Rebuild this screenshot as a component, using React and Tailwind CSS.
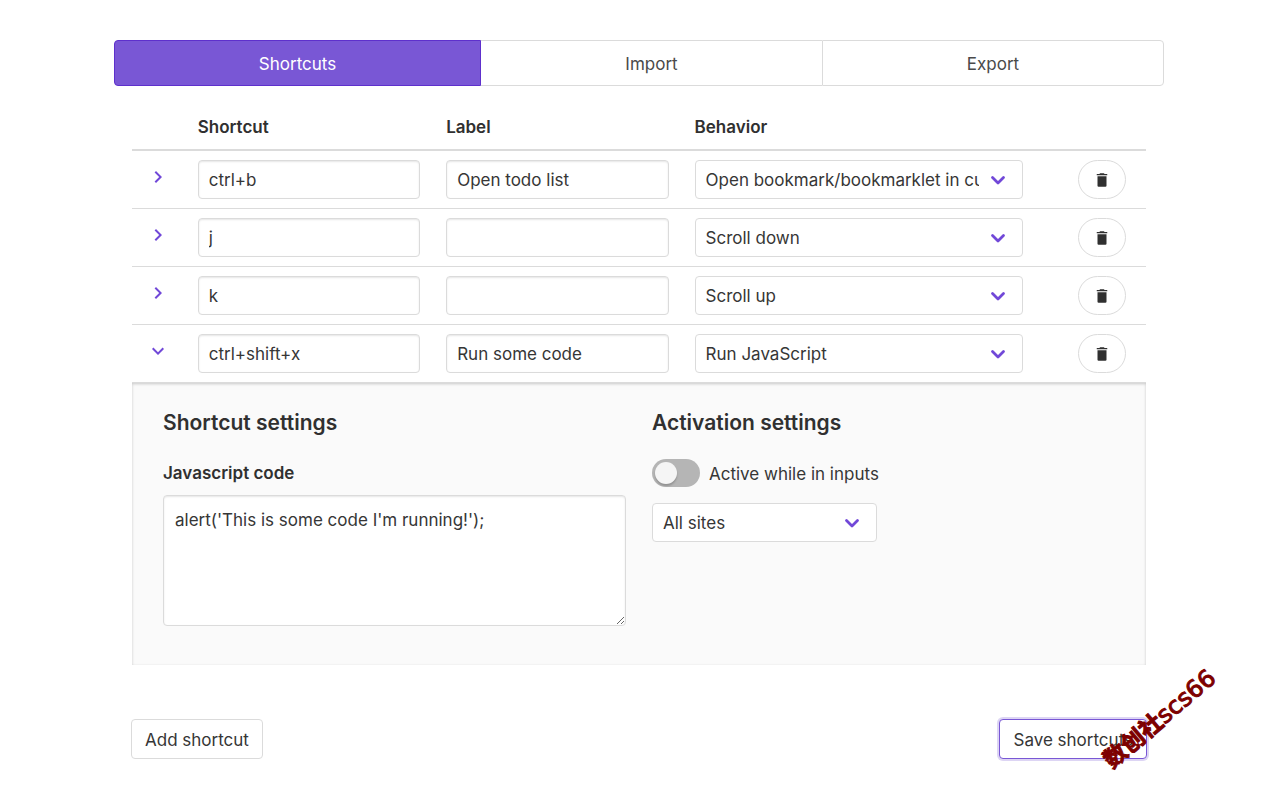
import { useState } from "react";

const BEHAVIORS = [
  "Open bookmark/bookmarklet in current tab",
  "Scroll down",
  "Scroll up",
  "Run JavaScript",
];

const SHORTCUTS = [
  { keys: "ctrl+b", label: "Open todo list", behavior: BEHAVIORS[0] },
  { keys: "j", label: "", behavior: BEHAVIORS[1] },
  { keys: "k", label: "", behavior: BEHAVIORS[2] },
  { keys: "ctrl+shift+x", label: "Run some code", behavior: BEHAVIORS[3] },
];

const fieldClass =
  "block h-[39px] w-full rounded border border-[#dbdbdb] bg-white px-[10px] pt-0.5 text-[#363636] shadow-[inset_0_1px_2px_rgba(10,10,10,0.1)] outline-none focus:border-[#7957d5]";

const buttonClass =
  "h-10 rounded border bg-white px-[13px] pt-0.5 text-[#363636] outline-none";

function Chevron({ open }) {
  return (
    <svg viewBox="0 0 24 24" className="size-6 fill-[#7148d8]" aria-hidden="true">
      {open ? (
        <path d="M7.41 8.58 12 13.17l4.59-4.59L18 10l-6 6-6-6 1.41-1.42Z" />
      ) : (
        <path d="M8.59 16.58 13.17 12 8.59 7.41 10 6l6 6-6 6-1.41-1.42Z" />
      )}
    </svg>
  );
}

function Select({ label, options, value }) {
  return (
    <div className="relative">
      <select
        aria-label={label}
        defaultValue={value}
        className="block h-[39px] w-full appearance-none rounded border border-[#dbdbdb] bg-white pt-0.5 pr-[43px] pl-[10px] text-[#363636] outline-none"
      >
        {options.map((option) => (
          <option key={option}>{option}</option>
        ))}
      </select>
      <svg
        viewBox="0 0 16 12"
        className="pointer-events-none absolute top-[14px] right-[17px] h-3 w-4 fill-none stroke-[#7148d8]"
        strokeWidth="2.8"
        strokeLinecap="round"
        strokeLinejoin="round"
        aria-hidden="true"
      >
        <path d="M2.500 3.500 8 9l5.500-5.500" />
      </svg>
    </div>
  );
}

function Tabs() {
  return (
    <nav className="grid h-[46px] grid-cols-[367fr_341fr_342fr] text-[#4a4a4a]">
      <a href="#shortcuts" className="flex items-center justify-center rounded-l border border-[#5e30cc] bg-[#7957d5] pt-0.5 text-white">
        Shortcuts
      </a>
      <a href="#import" className="flex items-center justify-center border-y border-[#dbdbdb] pt-0.5">
        Import
      </a>
      <a href="#export" className="flex items-center justify-center rounded-r border border-[#dbdbdb] pt-0.5">
        Export
      </a>
    </nav>
  );
}

function SettingsPanel() {
  return (
    <div className="grid h-[282px] grid-cols-2 gap-[26px] bg-[#fafafa] px-[31px] pt-6 shadow-[inset_0_1px_3px_rgba(10,10,10,0.2)]">
      <section>
        <h2 className="pt-0.5 text-[21px] leading-7 font-semibold text-[#303030]">Shortcut settings</h2>
        <label htmlFor="code" className="mt-[22px] block leading-7 font-semibold text-[#303030]">
          Javascript code
        </label>
        <textarea
          id="code"
          defaultValue="alert('This is some code I'm running!');"
          className="mt-2 block h-[131px] w-full rounded border border-[#dbdbdb] bg-white px-[11px] py-3 text-[#363636] shadow-[inset_0_1px_2px_rgba(10,10,10,0.1)] outline-none"
        />
      </section>
      <section>
        <h2 className="pt-0.5 text-[21px] leading-7 font-semibold text-[#303030]">Activation settings</h2>
        <label className="mt-[22px] flex items-center gap-[9px] text-[#363636]">
          <input type="checkbox" className="peer sr-only" />
          <span className="flex h-7 w-12 rounded-full bg-[#b5b5b5] p-[3px] peer-checked:justify-end peer-checked:bg-[#7957d5]">
            <span className="size-[22px] rounded-full bg-[#f5f5f5] shadow-[0_2px_2px_rgba(0,0,0,0.2)]" />
          </span>
          <span className="pt-0.5">Active while in inputs</span>
        </label>
        <div className="mt-4 w-[225px]">
          <Select label="Sites" options={["All sites", "Only on specific sites"]} value="All sites" />
        </div>
      </section>
    </div>
  );
}

function ShortcutRow({ item, open, onToggle }) {
  return (
    <>
      <tr className="h-[58px] border-b border-[#dbdbdb]">
        <td className="p-0 pb-1">
          <button
            type="button"
            aria-label={open ? "Collapse" : "Expand"}
            aria-expanded={open}
            onClick={onToggle}
            className="mx-auto block"
          >
            <Chevron open={open} />
          </button>
        </td>
        <td className="px-[13px] py-0">
          <input aria-label="Shortcut" defaultValue={item.keys} className={fieldClass} />
        </td>
        <td className="px-[13px] py-0">
          <input aria-label="Label" defaultValue={item.label} className={fieldClass} />
        </td>
        <td className="px-[13px] py-0">
          <Select label="Behavior" options={BEHAVIORS} value={item.behavior} />
        </td>
        <td className="py-0 pr-5 pl-0">
          <button
            type="button"
            aria-label="Delete shortcut"
            className="ml-auto flex h-[39px] w-12 items-center justify-center rounded-full border border-[#dbdbdb] bg-white pt-0.5"
          >
            <svg viewBox="0 0 24 24" className="size-[18px] fill-[#303030]" aria-hidden="true">
              <path d="M19 4h-3.500l-1-1h-5l-1 1H5v1.700h14V4ZM6 19.500a1.500 1.500 0 0 0 1.500 1.500h9a1.500 1.500 0 0 0 1.500-1.500V7H6v12.500Z" />
            </svg>
          </button>
        </td>
      </tr>
      {open && (
        <tr>
          <td colSpan={5} className="p-0">
            <SettingsPanel />
          </td>
        </tr>
      )}
    </>
  );
}

export default function App() {
  const [openRow, setOpenRow] = useState(3);

  return (
    <div className="min-h-screen bg-white pr-0.5 font-['Inter','Noto_Sans_CJK_SC',sans-serif] text-[17px] leading-6">
      <main className="mx-auto max-w-[1050px] pt-10">
        <Tabs />
        <div className="px-[18px] pt-[18px]">
          <table className="w-full table-fixed border-collapse text-left">
            <colgroup>
              <col className="w-[5.2%]" />
              <col className="w-[24.5%]" />
              <col className="w-[24.5%]" />
              <col className="w-[35%]" />
              <col className="w-[10.8%]" />
            </colgroup>
            <thead>
              <tr className="h-[46px] border-b-2 border-[#dbdbdb] text-[#303030]">
                <th aria-label="Details" className="p-0" />
                <th className="px-[13px] py-0 font-semibold">Shortcut</th>
                <th className="px-[13px] py-0 font-semibold">Label</th>
                <th className="px-[13px] py-0 font-semibold">Behavior</th>
                <th aria-label="Actions" className="p-0" />
              </tr>
            </thead>
            <tbody>
              {SHORTCUTS.map((item, index) => (
                <ShortcutRow
                  key={item.keys}
                  item={item}
                  open={openRow === index}
                  onToggle={() => setOpenRow(openRow === index ? -1 : index)}
                />
              ))}
            </tbody>
          </table>
        </div>
        <div className="relative mt-[54px] flex justify-between px-[17px]">
          <button type="button" className={`${buttonClass} border-[#dbdbdb]`}>
            Add shortcut
          </button>
          <button
            type="button"
            className={`${buttonClass} border-[#7957d5] shadow-[0_0_0_2px_rgba(121,87,213,0.25)]`}
          >
            Save shortcuts
          </button>
          <span className="pointer-events-none absolute -right-16 bottom-[26px] -rotate-[40deg] font-['Noto_Sans_CJK_SC',sans-serif] text-[23px] leading-7 font-bold whitespace-nowrap text-[#7d0000] [-webkit-text-stroke:1px_#7d0000]">
            数创社<span className="font-['DejaVu_Sans',sans-serif] text-[24px] font-normal">scs66</span>
          </span>
        </div>
      </main>
    </div>
  );
}
